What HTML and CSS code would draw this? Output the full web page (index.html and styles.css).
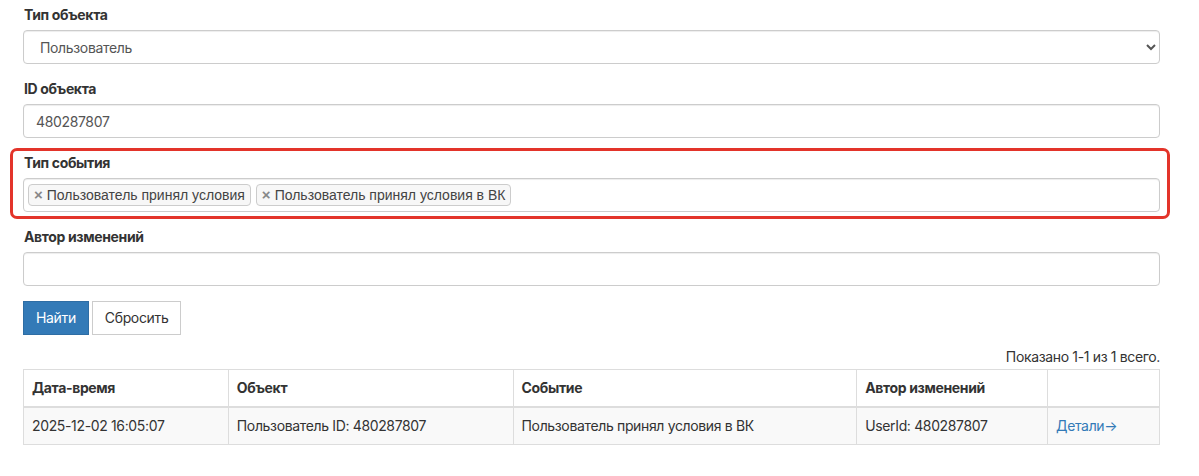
FILE: index.html
```html
<!DOCTYPE html>
<html lang="ru">
<head>
<meta charset="utf-8">
<link rel="stylesheet" href="styles.css">
</head>
<body>
<div class="page">
  <form class="filter">
    <div class="group">
      <label class="label">Тип объекта</label>
      <select class="control select">
        <option>Пользователь</option>
      </select>
    </div>
    <div class="group">
      <label class="label">ID объекта</label>
      <input class="control" type="text" value="480287807">
    </div>
    <div class="group highlighted">
      <label class="label">Тип события</label>
      <div class="control tags">
        <span class="tag"><span class="tag-x">×</span>Пользователь принял условия</span>
        <span class="tag"><span class="tag-x">×</span>Пользователь принял условия в ВК</span>
      </div>
    </div>
    <div class="group">
      <label class="label">Автор изменений</label>
      <input class="control" type="text" value="">
    </div>
    <div class="actions">
      <button type="button" class="btn btn-primary">Найти</button>
      <button type="button" class="btn btn-default">Сбросить</button>
    </div>
  </form>
  <div class="summary">Показано <b>1-1</b> из <b>1</b> всего.</div>
  <table class="grid">
    <thead>
      <tr>
        <th class="c1">Дата-время</th>
        <th class="c2">Объект</th>
        <th class="c3">Событие</th>
        <th class="c4">Автор изменений</th>
        <th class="c5"></th>
      </tr>
    </thead>
    <tbody>
      <tr>
        <td>2025-12-02 16:05:07</td>
        <td>Пользователь ID: 480287807</td>
        <td>Пользователь принял условия в ВК</td>
        <td>UserId: 480287807</td>
        <td><a class="link" href="#">Детали→</a></td>
      </tr>
    </tbody>
  </table>
</div>
</body>
</html>
```
FILE: styles.css
```css
* { box-sizing: border-box; }
html, body { margin: 0; padding: 0; background: #fff; }
body {
  font-family: Inter, "Noto Sans", sans-serif;
  font-size: 14px;
  line-height: 20px;
  letter-spacing: -0.35px;
  color: #333;
}
.page {
  width: 1137px;
  margin-left: 23px;
  padding-top: 5px;
}
.group {
  margin-bottom: 15px;
  position: relative;
}
.label {
  display: block;
  font-weight: 700;
  margin-bottom: 5px;
  padding-left: 1px;
  color: #333;
}
.control {
  display: block;
  width: 100%;
  height: 34px;
  padding: 6px 12px;
  font-family: inherit;
  font-size: 14px;
  line-height: 20px;
  letter-spacing: -0.35px;
  color: #555;
  background: #fff;
  border: 1px solid #ccc;
  border-radius: 4px;
  box-shadow: inset 0 1px 1px rgba(0,0,0,.075);
  outline: none;
}
.select { padding-left: 12px; }
.highlighted::before {
  content: "";
  position: absolute;
  left: -13px;
  right: -10px;
  top: -5px;
  bottom: -7px;
  border: 3px solid #e3342a;
  border-radius: 7px;
  pointer-events: none;
}
.tags {
  display: flex;
  align-items: center;
  gap: 5px;
  padding: 0 4px;
  height: 34px;
}
.tag {
  display: inline-flex;
  align-items: center;
  height: 22px;
  padding: 0 5px;
  font-family: "Liberation Sans", Arial, sans-serif;
  font-size: 14px;
  letter-spacing: 0;
  color: #444;
  background: #f7f7f7;
  border: 1px solid #ccc;
  border-radius: 4px;
}
.tag-x {
  font-weight: 700;
  color: #888;
  margin-right: 4px;
  font-size: 15px;
}
.actions {
  display: flex;
  gap: 3px;
}
.btn {
  height: 34px;
  padding: 6px 12px;
  font-family: inherit;
  font-size: 14px;
  line-height: 20px;
  letter-spacing: -0.35px;
  border: 1px solid transparent;
  border-radius: 0;
  cursor: pointer;
}
.btn-primary {
  background: #337ab7;
  border-color: #2e6da4;
  color: #fff;
}
.btn-default {
  background: #fff;
  border-color: #ccc;
  color: #333;
}
.summary {
  text-align: right;
  margin-top: 12px;
  margin-bottom: 2px;
  color: #333;
}
.summary b { font-weight: 400; }
.grid {
  width: 100%;
  border-collapse: collapse;
  border: 1px solid #ddd;
}
.grid th, .grid td {
  padding: 8px;
  text-align: left;
  border: 1px solid #ddd;
  line-height: 20px;
  vertical-align: top;
}
.grid th {
  font-weight: 700;
  border-bottom: 2px solid #ddd;
}
.grid tbody tr { background: #f9f9f9; }
.c1 { width: 205px; }
.c2 { width: 285px; }
.c3 { width: 344px; }
.c4 { width: 191px; }
.c5 { width: 112px; }
.link { color: #337ab7; text-decoration: none; }
```
